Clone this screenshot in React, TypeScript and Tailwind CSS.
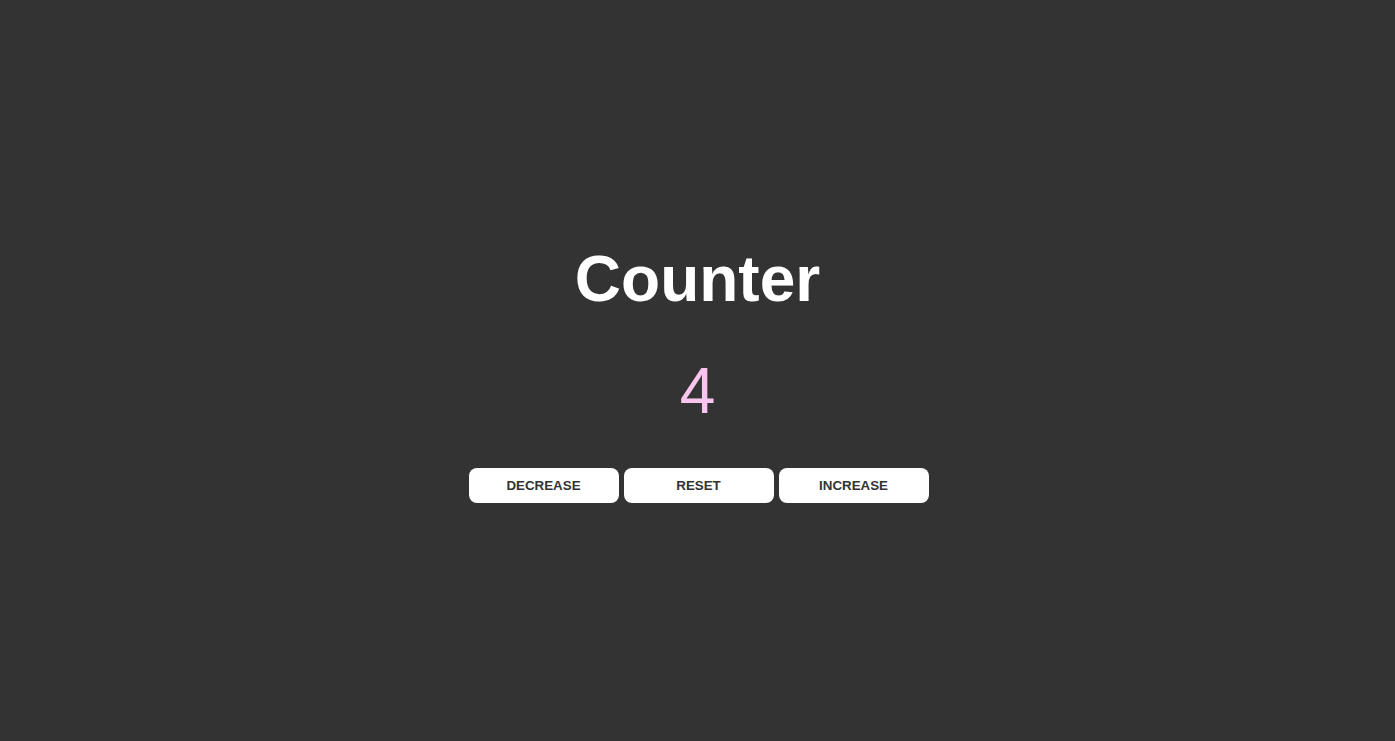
import React, { useState } from "react";

export default function App() {
  const [count, setCount] = useState(4);

  return (
    <div className="min-h-screen bg-[#333333] flex flex-col items-center justify-center pt-[9px] font-['Liberation_Sans',Arial,sans-serif]">
      <h1 className="text-[64px] leading-none font-bold text-white">Counter</h1>
      <p className="mt-[48px] text-[64px] leading-none text-[#f9c5ee]">{count}</p>
      <div className="mt-[45px] flex gap-[5px] pl-[2px]">
        <button
          onClick={() => setCount(count - 1)}
          className="w-[150px] h-[35px] bg-white rounded-lg text-[13.333px] font-bold text-[#333333] uppercase"
        >
          Decrease
        </button>
        <button
          onClick={() => setCount(0)}
          className="w-[150px] h-[35px] bg-white rounded-lg text-[13.333px] font-bold text-[#333333] uppercase"
        >
          Reset
        </button>
        <button
          onClick={() => setCount(count + 1)}
          className="w-[150px] h-[35px] bg-white rounded-lg text-[13.333px] font-bold text-[#333333] uppercase"
        >
          Increase
        </button>
      </div>
    </div>
  );
}
